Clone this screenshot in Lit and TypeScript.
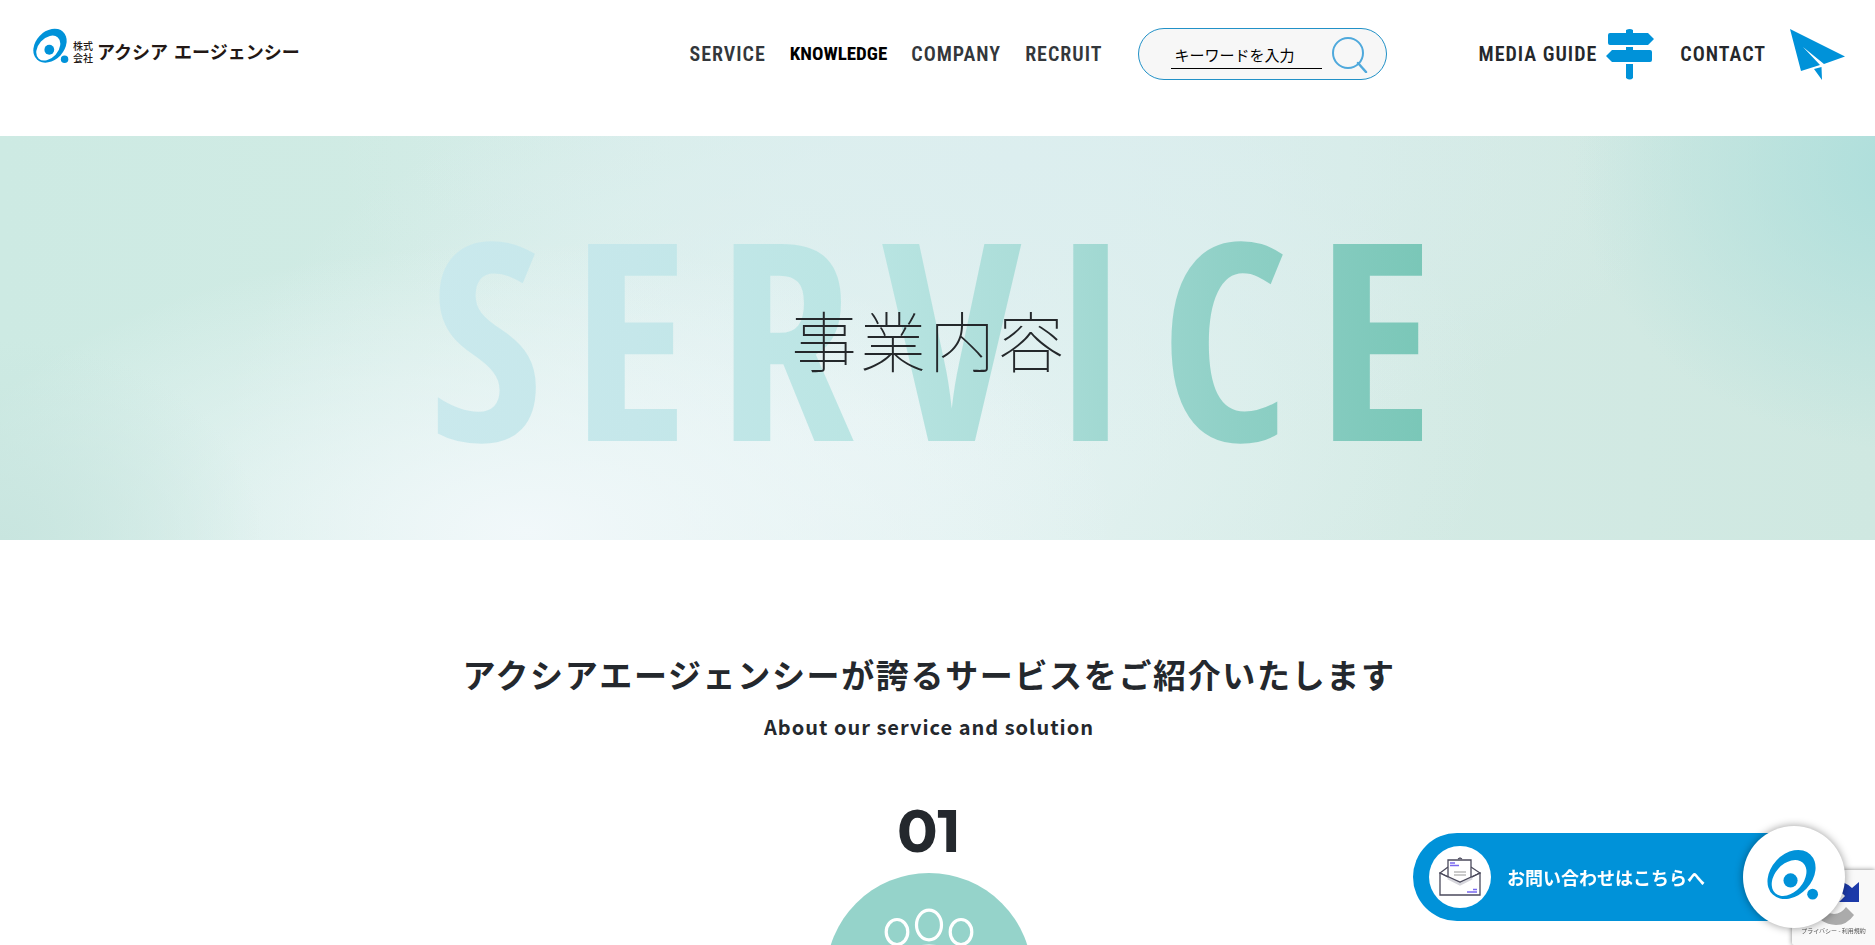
import { LitElement, html, css, svg } from 'lit';
import { customElement } from 'lit/decorators.js';

const mark = svg`
  <ellipse cx="24" cy="25" rx="28" ry="21" transform="rotate(-47 24 25)" fill="#0092d9"/>
  <ellipse cx="21.500" cy="28.500" rx="21" ry="14.500" transform="rotate(-48 21.500 28.500)" fill="#fff"/>
  <circle cx="23" cy="31" r="7.200" fill="#0092d9"/>
  <circle cx="45.500" cy="45" r="5.500" fill="#0092d9"/>`;

@customElement('site-header')
class SiteHeader extends LitElement {
  static styles = css`
    :host { display: block; }
    .bar { display: flex; align-items: flex-start; height: 136px; padding: 28px 30px 0 33px; box-sizing: border-box; }
    a { color: #33373b; text-decoration: none; }
    .logo { display: flex; align-items: flex-end; height: 36px; gap: 4px; color: #231815; }
    .logo svg { width: 36px; height: 36px; align-self: center; }
    .kind { font-size: 10px; line-height: 12px; font-weight: 500; width: 20px; }
    .name { display: flex; gap: 6px; font-size: 18px; line-height: 26px; font-weight: 700; white-space: nowrap; }
    .nav { display: flex; align-items: center; height: 52px; margin-left: auto; gap: 24px; }
    .nav a, .tools a { font: 600 20px/28px "Roboto Condensed", "Open Sans Condensed", sans-serif; letter-spacing: 1px; white-space: nowrap; }
    .nav a.strong { font-size: 19px; font-weight: 700; letter-spacing: 0; color: #000; }
    .search { display: flex; align-items: center; box-sizing: border-box; width: 249px; height: 52px; margin-left: 36px; padding: 0 18px 0 32px; gap: 10px;
      border: 1px solid #2191c7; border-radius: 26px; background: #f7f7f7; }
    .search input { flex: 1; min-width: 0; height: 28px; margin-top: 2px; padding: 0 3px; box-sizing: border-box; border: 0; border-bottom: 1px solid #000; background: none; outline: none;
      font: 400 15px/24px "Noto Sans CJK JP", sans-serif; color: #000; }
    .search input::placeholder { color: #000; opacity: 1; }
    .search button { display: flex; padding: 0; border: 0; background: none; cursor: pointer; }
    .tools { display: flex; align-items: center; height: 52px; gap: 26px; margin-left: 91px; }
    .tools a { display: flex; align-items: center; gap: 9px; color: #25282c; }
    .tools a.contact { gap: 24px; }
  `;
  render() {
    return html`
      <header class="bar">
        <a class="logo" href="#">
          <svg viewBox="-1 0 53 51" aria-hidden="true">${mark}</svg>
          <span class="kind">株式会社</span>
          <span class="name"><span>アクシア</span><span>エージェンシー</span></span>
        </a>
        <nav class="nav">
          <a href="#">SERVICE</a><a class="strong" href="#">KNOWLEDGE</a><a href="#">COMPANY</a><a href="#">RECRUIT</a>
        </nav>
        <form class="search" role="search" @submit=${(e: Event) => e.preventDefault()}>
          <input type="text" placeholder="キーワードを入力" aria-label="キーワードを入力">
          <button type="submit" aria-label="検索">
            <svg width="36" height="38" viewBox="0 0 36 38" fill="none" stroke="#4fa9dc" stroke-width="2" stroke-linecap="round"><circle cx="16" cy="18" r="15"/><path d="M26 28L34 37" stroke-width="2.500"/></svg>
          </button>
        </form>
        <div class="tools">
          <a href="#">MEDIA GUIDE
            <svg width="48" height="51" viewBox="0 0 48 51" fill="#0092d9" aria-hidden="true">
              <path d="M20 1Q24 -1 27 1V4H42L48 10L42 16H4Q2 16 2 14V6Q2 4 4 4H20ZM20 18H27V21H44Q46 21 46 23V31Q46 33 44 33H6L0 27L6 21H20ZM20 35H27V49Q24 52 20 49Z"/>
            </svg>
          </a>
          <a class="contact" href="#">CONTACT
            <svg width="55" height="51" viewBox="0 0 55 51" fill="#0092d9" aria-hidden="true">
              <path d="M0 0L55 27.500L34 35L13 18L30 36L11 42ZM24 40L31.500 38L32 51Z"/>
            </svg>
          </a>
        </div>
      </header>`;
  }
}

@customElement('page-hero')
class PageHero extends LitElement {
  static styles = css`
    :host { display: block; }
    .hero { display: grid; place-items: center; height: 404px; padding-right: 17px; overflow: hidden;
      background:
        radial-gradient(ellipse 18% 70% at 102% 8%, #acdedb 0%, #acdedb00 100%),
        radial-gradient(ellipse 14% 50% at 0% 100%, #c8e5df 0%, #c8e5df00 100%),
        radial-gradient(ellipse 32% 72% at 28% 98%, #f1f8fa 0%, #f1f8fa00 100%),
        radial-gradient(ellipse 36% 75% at 54% 6%, #dceeef 0%, #dceeef00 100%),
        radial-gradient(ellipse 34% 90% at 46% 70%, #e6f3f3 0%, #e6f3f300 100%),
        linear-gradient(90deg, #cdeae3, #d0ebe4 22%, #dbefec 50%, #d3eae4 75%, #cfe8e1); }
    .word, h1 { grid-area: 1 / 1; margin: 0; white-space: nowrap; }
    .word { font: 700 276px/396px "Open Sans Condensed", "Roboto Condensed", sans-serif; letter-spacing: 28px; margin: 0 -32px 8px 0; color: transparent;
      background: linear-gradient(90deg, #cae9ed 0%, #c5e7ea 20%, #bae5e3 42%, #a9dcd7 60%, #8fd0c6 78%, #76c5b5 100%); background-clip: text; -webkit-background-clip: text; }
    h1 { font: 100 66px/96px "Noto Sans CJK JP", sans-serif; letter-spacing: 3px; color: #24282b; }
  `;
  render() {
    return html`<section class="hero"><span class="word">SERVICE</span><h1>事業内容</h1></section>`;
  }
}

@customElement('service-intro')
class ServiceIntro extends LitElement {
  static styles = css`
    :host { display: block; }
    .intro { display: flex; flex-direction: column; align-items: center; padding: 108px 17px 0 0; color: #24282d; }
    h2, p { margin: 0; white-space: nowrap; }
    h2 { font: 700 33px/52px "Noto Sans CJK JP", sans-serif; letter-spacing: .05em; }
    .sub { margin-top: 12px; font: 700 20px/30px "Noto Sans CJK JP", sans-serif; letter-spacing: 1px; }
    .number { margin-top: 53px; font: 700 60px/72px Montserrat, Inter, sans-serif; }
    .badge { margin-top: 6px; }
  `;
  render() {
    return html`
      <section class="intro">
        <h2>アクシアエージェンシーが誇るサービスをご紹介いたします</h2>
        <p class="sub">About our service and solution</p>
        <p class="number">01</p>
        <svg class="badge" width="206" height="206" viewBox="0 0 206 206" aria-hidden="true">
          <circle cx="103" cy="103" r="103" fill="#95d3ca"/>
          <g fill="none" stroke="#fff" stroke-width="3.200">
            <ellipse cx="103" cy="52" rx="12.500" ry="14.800"/>
            <ellipse cx="71" cy="59" rx="10.800" ry="12.500"/>
            <ellipse cx="135" cy="59" rx="10.800" ry="12.500"/>
            <path d="M79 130V94Q79 73 103 73T127 94V130ZM75 78Q49 76 49 98V124H77M131 78Q157 76 157 98V124H129"/>
          </g>
        </svg>
      </section>`;
  }
}

@customElement('contact-float')
class ContactFloat extends LitElement {
  static styles = css`
    :host { position: fixed; right: 0; bottom: 0; width: 462px; height: 119px; }
    .policy { position: absolute; right: 0; bottom: 0; width: 83px; height: 75px; background: #f9f9f9; box-shadow: 0 0 5px #808080; border-radius: 2px 0 0 2px; }
    .policy svg { position: absolute; left: 17px; top: 8px; }
    .policy p { position: absolute; left: 0; right: 0; bottom: 8px; margin: 0; text-align: center; white-space: nowrap; font: 400 6px/12px "Noto Sans CJK JP", sans-serif; color: #555; }
    .contact { position: absolute; left: 0; top: 7px; display: flex; align-items: center; box-sizing: border-box; width: 382px; height: 88px; padding-left: 16px; gap: 16px;
      border-radius: 44px 0 0 44px; background: #0092d9; color: #fff; text-decoration: none; font: 700 18px/28px "Noto Sans CJK JP", sans-serif; white-space: nowrap; }
    .mail { display: grid; place-items: center; width: 62px; height: 62px; border-radius: 50%; background: #fff; }
    .round { position: absolute; left: 330px; top: 0; display: grid; place-items: center; width: 102px; height: 102px; border-radius: 50%; background: #fff; box-shadow: 0 0 8px #0006; }
    .round svg { width: 52px; height: 52px; margin: 0 2px 4px 0; }
  `;
  render() {
    return html`
      <div class="policy">
        <svg width="52" height="48" viewBox="0 0 52 48" aria-hidden="true">
          <path d="M50 4V24H30L36 18Q32 13 25 13V3Q36 3 43 10Z" fill="#1c3aa9"/>
          <path d="M4 31Q10 46 27 47Q38 47 45 37L37 29Q32 36 25 36Q15 36 10 25Z" fill="#ababab"/>
        </svg>
        <p>プライバシー - 利用規約</p>
      </div>
      <a class="contact" href="#">
        <span class="mail">
          <svg width="42" height="40" viewBox="0 0 42 40" fill="none" stroke="#4b4a5c" stroke-width="1.300" aria-hidden="true">
            <path d="M1 16L21 1L41 16V38H1Z" fill="#fff" stroke="none"/>
            <path d="M19 2L21 1L23 2M9 10L1 16L9 21M32 10L41 16L32 21"/>
            <path d="M9 24V3H32V24" fill="#fff"/>
            <path d="M1 16L21 26L41 16V38H1Z" fill="#fff"/>
            <path d="M9 21L21 27L33 21" stroke="#d6d6dc" stroke-width="3"/>
            <path d="M1 16L21 25L41 16"/>
            <path d="M15 15H27M15 18H27" stroke="#bbb"/>
            <path d="M11 6H16M11 8.500H20M34 32.500H38M28 35H38" stroke="#7a68f0"/>
          </svg>
        </span>
        <span>お問い合わせはこちらへ</span>
      </a>
      <a class="round" href="#" aria-label="お問い合わせ"><svg viewBox="-1 0 53 51">${mark}</svg></a>`;
  }
}

@customElement('app-root')
class AppRoot extends LitElement {
  static styles = css`
    :host { display: block; height: 100vh; overflow: hidden; background: #fff; font-family: "Noto Sans CJK JP", sans-serif; }
  `;
  render() {
    return html`
      <site-header></site-header>
      <main>
        <page-hero></page-hero>
        <service-intro></service-intro>
      </main>
      <contact-float></contact-float>`;
  }
}
